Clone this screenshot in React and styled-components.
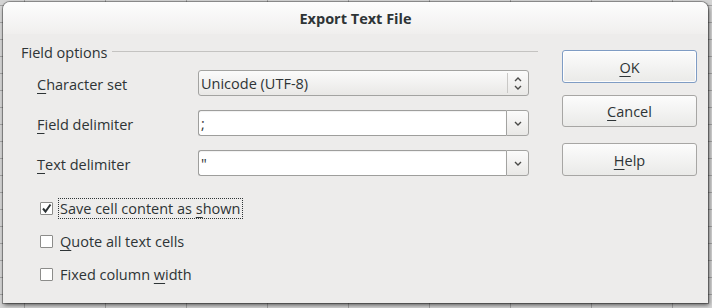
import React from 'react';
import styled, { createGlobalStyle } from 'styled-components';

const Global = createGlobalStyle`
  html, body { margin: 0; padding: 0; width: 712px; height: 308px; overflow: hidden; }
  body {
    background-color: #d4d4d4;
    background-image:
      linear-gradient(to right, #a4a4a4 1px, transparent 1px),
      linear-gradient(to bottom, #a4a4a4 1px, transparent 1px);
    background-size: 81px 100%, 100% 17px;
    background-position: 24px 0, 0 5px;
    font-family: "Open Sans", "DejaVu Sans", sans-serif;
    color: #2e3436;
  }
`;

const Dialog = styled.div`
  margin: 2px 0 0 3px;
  width: 705px;
  height: 301px;
  background: #edeceb;
  border-radius: 7px 7px 0 0;
  box-shadow: 0 0 0 1px rgba(0, 0, 0, 0.3), 1px 2px 4px rgba(0, 0, 0, 0.6);
  display: flex;
  flex-direction: column;
  overflow: hidden;
`;

const TitleBar = styled.div`
  height: 32px;
  flex: none;
  display: flex;
  align-items: center;
  justify-content: center;
  background: linear-gradient(#fdfdfd, #f0efee);
  font-weight: 700;
  font-size: 14.5px;
  color: #2e3436;
`;

const Body = styled.div`
  flex: 1;
  display: flex;
`;

const LeftCol = styled.div`
  width: 535px;
  display: flex;
  flex-direction: column;
  padding-top: 9px;
`;

const FrameHeader = styled.div`
  display: flex;
  align-items: center;
  gap: 4px;
  height: 20px;
  padding-left: 18px;
  font-size: 14.5px;
  line-height: 20px;
`;

const FrameLine = styled.div`
  flex: 1;
  height: 1px;
  background: #c4c3c1;
  margin-bottom: 4px;
`;

const FieldGrid = styled.div`
  display: grid;
  grid-template-columns: 161px 331px;
  grid-auto-rows: 26px;
  row-gap: 14px;
  padding-left: 34px;
  margin-top: 7px;
  align-items: center;
`;

const Label = styled.div`
  font-size: 14.5px;
  line-height: 20px;
  padding-top: 3px;
  white-space: nowrap;
`;

const Mn = styled.span`
  text-decoration: underline;
  text-underline-offset: 3px;
  text-decoration-thickness: 1px;
`;

const ComboButton = styled.div`
  height: 26px;
  box-sizing: border-box;
  border: 1px solid #a3a3a1;
  border-radius: 3px;
  background: linear-gradient(#fbfbfb, #e9e8e6);
  display: flex;
  align-items: center;
  font-size: 14.5px;
  padding-left: 2px;
`;

const ComboText = styled.div`
  flex: 1;
  padding-top: 1px;
`;

const ComboSep = styled.div`
  width: 1px;
  height: 20px;
  background: #c9c8c6;
`;

const ArrowCell = styled.div`
  width: ${p => p.$w}px;
  height: 100%;
  display: flex;
  flex-direction: column;
  align-items: center;
  justify-content: center;
  gap: 3px;
`;

const EntryCombo = styled.div`
  height: 26px;
  display: flex;
`;

const Entry = styled.div`
  flex: 1;
  box-sizing: border-box;
  border: 1px solid #9e9e9c;
  border-right: none;
  border-radius: 3px 0 0 3px;
  background: #ffffff;
  font-size: 14.5px;
  line-height: 24px;
  padding: 1px 0 0 2px;
  box-shadow: inset 0 1px 1px rgba(0, 0, 0, 0.06);
`;

const DropButton = styled.div`
  width: 23px;
  box-sizing: border-box;
  border: 1px solid #a3a3a1;
  border-radius: 0 3px 3px 0;
  background: linear-gradient(#fbfbfb, #e9e8e6);
  display: flex;
  align-items: center;
  justify-content: center;
`;

const Checks = styled.div`
  display: flex;
  flex-direction: column;
  gap: 13px;
  margin-top: 22px;
  padding-left: 37px;
`;

const CheckRow = styled.div`
  display: flex;
  align-items: center;
  height: 20px;
  gap: 5px;
`;

const Box = styled.div`
  width: 13px;
  height: 13px;
  box-sizing: border-box;
  border: 1px solid #8c8c8a;
  border-radius: 1px;
  background: #ffffff;
  display: flex;
  align-items: center;
  justify-content: center;
`;

const CheckLabel = styled.div`
  font-size: 14.5px;
  line-height: 18px;
  padding: 1px 2px 0 1px;
  border: 1px ${p => (p.$focus ? 'dotted #2e3436' : 'solid transparent')};
  white-space: nowrap;
`;

const RightCol = styled.div`
  margin-left: 24px;
  width: 135px;
  display: flex;
  flex-direction: column;
  padding-top: 16px;
`;

const Button = styled.div`
  height: ${p => p.$h}px;
  margin-top: ${p => p.$mt}px;
  box-sizing: border-box;
  border: 1px solid ${p => (p.$default ? '#7f9cc4' : '#a7a6a4')};
  border-radius: 3px;
  background: linear-gradient(#fcfcfc, #eaeae8);
  box-shadow: ${p => (p.$default ? 'inset 0 0 0 1px rgba(255,255,255,0.9)' : 'none')};
  display: flex;
  align-items: center;
  justify-content: center;
  font-size: 14.5px;
  padding-top: 1px;
  color: #2e3436;
`;

const Chevron = ({ up }) => (
  <svg width="8" height="5" viewBox="0 0 8 5">
    <path
      d={up ? 'M1 4 L4 1 L7 4' : 'M1 1 L4 4 L7 1'}
      fill="none"
      stroke="#4a4a48"
      strokeWidth="1.4"
    />
  </svg>
);

const Check = () => (
  <svg width="11" height="11" viewBox="0 0 11 11">
    <path d="M2 5.5 L4.5 8.5 L9.5 1.5" fill="none" stroke="#2e3436" strokeWidth="2" />
  </svg>
);

export default function App() {
  return (
    <>
      <Global />
      <Dialog>
        <TitleBar>Export Text File</TitleBar>
        <Body>
          <LeftCol>
            <FrameHeader>
              <span>Field options</span>
              <FrameLine />
            </FrameHeader>
            <FieldGrid>
              <Label><Mn>C</Mn>haracter set</Label>
              <ComboButton>
                <ComboText>Unicode (UTF-8)</ComboText>
                <ComboSep />
                <ArrowCell $w={20}>
                  <Chevron up />
                  <Chevron />
                </ArrowCell>
              </ComboButton>
              <Label><Mn>F</Mn>ield delimiter</Label>
              <EntryCombo>
                <Entry>;</Entry>
                <DropButton><Chevron /></DropButton>
              </EntryCombo>
              <Label><Mn>T</Mn>ext delimiter</Label>
              <EntryCombo>
                <Entry>"</Entry>
                <DropButton><Chevron /></DropButton>
              </EntryCombo>
            </FieldGrid>
            <Checks>
              <CheckRow>
                <Box><Check /></Box>
                <CheckLabel $focus>Save cell content as <Mn>s</Mn>hown</CheckLabel>
              </CheckRow>
              <CheckRow>
                <Box />
                <CheckLabel><Mn>Q</Mn>uote all text cells</CheckLabel>
              </CheckRow>
              <CheckRow>
                <Box />
                <CheckLabel>Fixed column <Mn>w</Mn>idth</CheckLabel>
              </CheckRow>
            </Checks>
          </LeftCol>
          <RightCol>
            <Button $default $h={33} $mt={0}><span><Mn>O</Mn>K</span></Button>
            <Button $h={32} $mt={12}><span><Mn>C</Mn>ancel</span></Button>
            <Button $h={33} $mt={16}><span><Mn>H</Mn>elp</span></Button>
          </RightCol>
        </Body>
      </Dialog>
    </>
  );
}
